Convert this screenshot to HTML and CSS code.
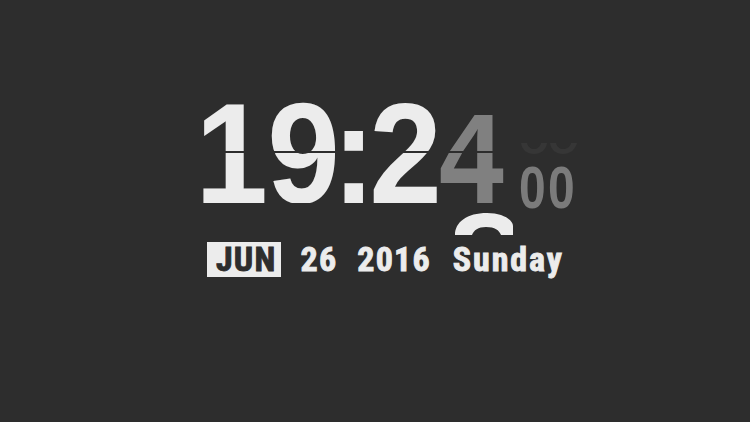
FILE: index.html
```html
<!DOCTYPE html>
<html>
<head>
<meta charset="utf-8">
<link rel="stylesheet" href="styles.css">
</head>
<body>
<main class="clock">
  <div class="time">
    <div class="digit d1"><div class="half top"><span>1</span></div><div class="half bottom"><span>1</span></div></div>
    <div class="digit d9"><div class="half top"><span>9</span></div><div class="half bottom"><span>9</span></div></div>
    <div class="colon"><span>:</span></div>
    <div class="digit d2"><div class="half top"><span>2</span></div><div class="half bottom"><span>2</span></div></div>
    <div class="digit d4 gray">
      <div class="half top squash"><span>4</span></div>
      <div class="half bottom"><span>4</span></div>
      <svg class="next-flap" width="58" height="22" viewBox="0 0 58 22"><path d="M0 22 C0 9 12 0 32 0 C48 0 58 7 58 13 L58 22 L46 22 C44 17 40 14 31 14 C23 14 19 17 17 22 Z" fill="#ececec"/></svg>
    </div>
    <div class="seconds">
      <svg class="ghost" width="58" height="11" viewBox="0 0 58 11">
        <path d="M0 0 C1 7 6 11 13 11 C20 11 25 7 26 0 L20 0 C19 4 16 6 13 6 C10 6 7 4 6 0 Z" fill="#363636"/>
        <path d="M29 0 C30 7 35 11 42 11 C49 11 54 7 56 0 L50 0 C49 4 46 6 42 6 C39 6 36 4 35 0 Z" fill="#363636"/>
      </svg>
      <span class="sec">00</span>
    </div>
  </div>
  <div class="date">
    <span class="month">JUN</span>
    <span>26</span>
    <span>2016</span>
    <span class="day">Sunday</span>
  </div>
</main>
</body>
</html>
```
FILE: styles.css
```css
html, body {
  margin: 0;
  padding: 0;
  background: #2d2d2d;
  width: 750px;
  height: 422px;
  overflow: hidden;
}
body {
  font-family: "Liberation Sans", Arial, sans-serif;
  font-weight: bold;
  color: #ececec;
}
.clock {
  padding: 101px 0 0 198px;
  display: flex;
  flex-direction: column;
}
.time {
  display: flex;
  align-items: flex-start;
  height: 102px;
}
.digit {
  position: relative;
  display: flex;
  flex-direction: column;
  gap: 2px;
}
.d1 { width: 67px; }
.d9 { width: 76px; }
.d2 { width: 77px; }
.d4 { width: 55px; }
.half {
  height: 50px;
  display: flex;
  justify-content: center;
  overflow-x: visible;
  overflow-y: clip;
}
.half span,
.colon span {
  flex: none;
  display: block;
  font-size: 142px;
  line-height: 142px;
  margin-top: -18.5px;
  transform: scaleX(0.92);
}
.half.bottom span {
  margin-top: -70.5px;
}
.gray {
  color: #808080;
}
.gray .half span {
  transform: scaleX(0.82);
}
.squash {
  transform: scaleY(0.78);
  transform-origin: bottom;
}
.colon {
  width: 26px;
  height: 102px;
  display: flex;
  justify-content: center;
  overflow-x: visible;
  overflow-y: clip;
}
.next-flap {
  position: absolute;
  left: 11px;
  top: 112px;
}
.seconds {
  position: relative;
  margin: 57px 0 0 20px;
}
.ghost {
  position: absolute;
  left: 2px;
  top: -15px;
}
.sec {
  display: block;
  color: #7b7b7b;
  font-size: 60px;
  line-height: 60px;
  letter-spacing: 2.9px;
  transform: scaleX(0.8);
  transform-origin: left;
}
.date {
  margin-top: 39px;
  margin-left: 9px;
  display: flex;
  align-items: center;
  gap: 20px;
  font-family: "Roboto Condensed", Roboto, "Liberation Sans", sans-serif;
  font-stretch: condensed;
  font-weight: bold;
  font-size: 34px;
  line-height: 35px;
  letter-spacing: 1.2px;
  -webkit-text-stroke: 0.9px #ececec;
}
.month {
  background: #ececec;
  color: #2d2d2d;
  -webkit-text-stroke: 0.9px #2d2d2d;
  padding: 0 4px 0 9px;
  height: 35px;
}
.day {
  margin-left: 2px;
  letter-spacing: 1.9px;
}
```
